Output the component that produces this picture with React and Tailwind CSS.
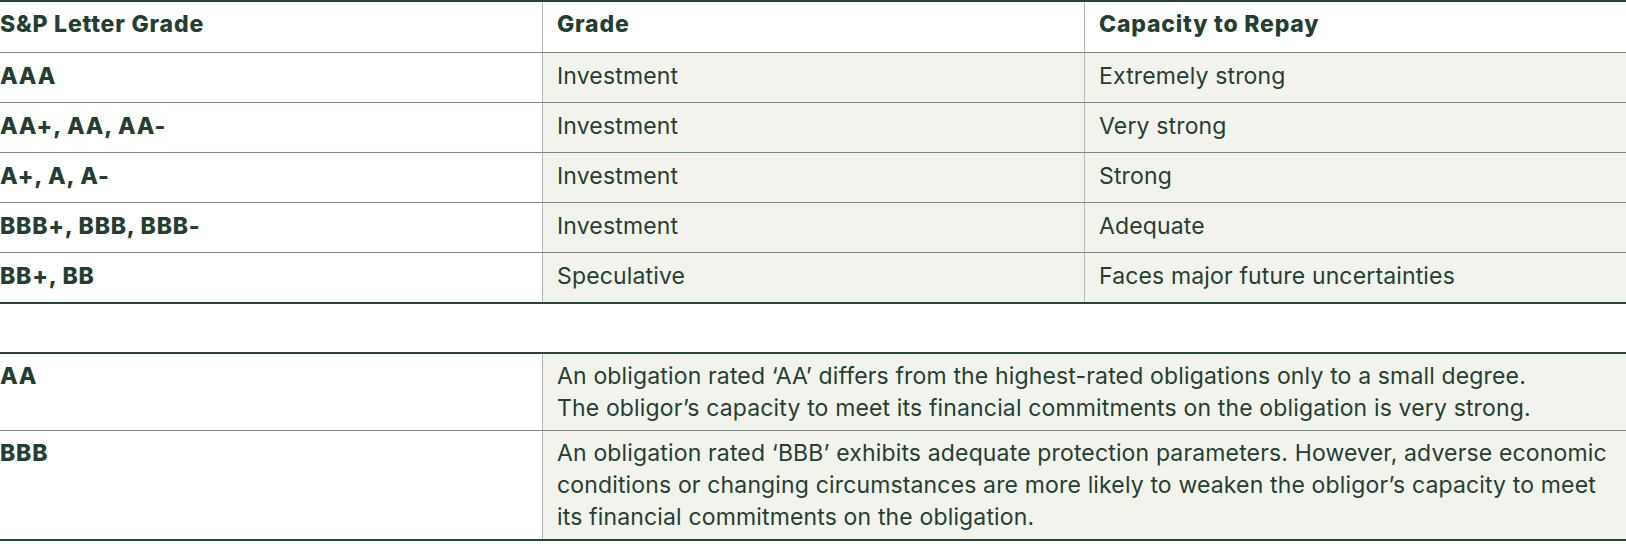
import React from 'react';

const ratings = [
  { letter: 'AAA', grade: 'Investment', capacity: 'Extremely strong' },
  { letter: 'AA+, AA, AA-', grade: 'Investment', capacity: 'Very strong' },
  { letter: 'A+, A, A-', grade: 'Investment', capacity: 'Strong' },
  { letter: 'BBB+, BBB, BBB-', grade: 'Investment', capacity: 'Adequate' },
  { letter: 'BB+, BB', grade: 'Speculative', capacity: 'Faces major future uncertainties' },
];

const definitions = [
  {
    letter: 'AA',
    lines: [
      'An obligation rated ‘AA’ differs from the highest-rated obligations only to a small degree.',
      'The obligor’s capacity to meet its financial commitments on the obligation is very strong.',
    ],
  },
  {
    letter: 'BBB',
    lines: [
      'An obligation rated ‘BBB’ exhibits adequate protection parameters. However, adverse economic',
      'conditions or changing circumstances are more likely to weaken the obligor’s capacity to meet',
      'its financial commitments on the obligation.',
    ],
  },
];

export default function App() {
  return (
    <div className="w-[1626px] h-[544px] bg-white text-[#243f31] text-[23px] leading-[32px] tracking-[0.15px] font-['Inter',sans-serif]">
      {/* Rating scale table */}
      <div className="border-t-2 border-b-2 border-[#2a4436]">
        <div className="grid grid-cols-3 border-b border-[#7d8a82]">
          <div className="pt-[6px] pb-[12px] font-extrabold tracking-[0.8px]">S&amp;P Letter Grade</div>
          <div className="pt-[6px] pb-[12px] pl-[14px] font-extrabold tracking-[0.8px] border-l border-[#b4b8b5]">Grade</div>
          <div className="pt-[6px] pb-[12px] pl-[14px] font-extrabold tracking-[0.8px] border-l border-[#b4b8b5]">Capacity to Repay</div>
        </div>
        {ratings.map((r, idx) => (
          <div
            key={r.letter}
            className={`grid grid-cols-3 ${idx < ratings.length - 1 ? 'border-b border-[#7d8a82]' : ''}`}
          >
            <div className="pt-[7px] pb-[10px] font-extrabold tracking-[0.8px]">{r.letter}</div>
            <div className="pt-[7px] pb-[10px] pl-[14px] bg-[#f3f3ee] border-l border-[#b4b8b5]">{r.grade}</div>
            <div className="pt-[7px] pb-[10px] pl-[14px] bg-[#f3f3ee] border-l border-[#b4b8b5]">{r.capacity}</div>
          </div>
        ))}
      </div>

      {/* Definitions table */}
      <div className="mt-[48px] border-t-2 border-b-2 border-[#2a4436]">
        {definitions.map((d, idx) => (
          <div
            key={d.letter}
            className={`grid grid-cols-3 ${idx < definitions.length - 1 ? 'border-b border-[#7d8a82]' : ''}`}
          >
            <div className="pt-[6px] pb-[6px] font-extrabold tracking-[0.8px]">{d.letter}</div>
            <div className="col-span-2 pt-[6px] pb-[6px] pl-[14px] bg-[#f3f3ee] border-l border-[#b4b8b5]">
              {d.lines.map((line) => (
                <div key={line}>{line}</div>
              ))}
            </div>
          </div>
        ))}
      </div>
    </div>
  );
}
